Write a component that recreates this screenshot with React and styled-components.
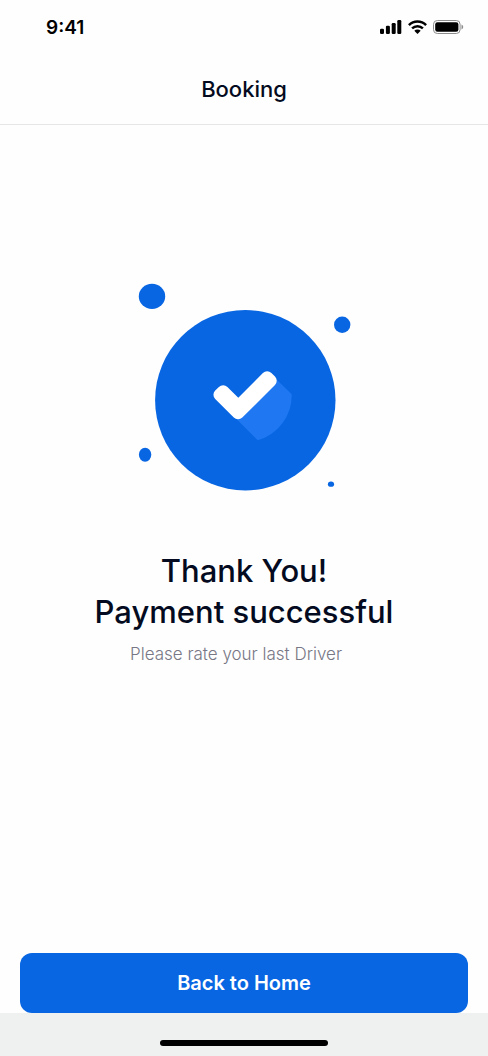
import React from 'react'
import styled, { createGlobalStyle } from 'styled-components'

const GlobalStyle = createGlobalStyle`
  * {
    box-sizing: border-box;
  }

  body {
    margin: 0;
    background: #fefefe;
    color: #040b20;
    font-family: Inter, 'Liberation Sans', sans-serif;
  }
`
const Screen = styled.div`
  display: flex;
  flex-direction: column;
  min-height: 100vh;
`
const StatusBar = styled.div`
  display: flex;
  align-items: center;
  justify-content: space-between;
  height: 54px;
  padding: 0 24px 0 46px;
`
const Time = styled.span`
  color: #000000;
  font-size: 19px;
  font-weight: 600;
`
const StatusIcons = styled.div`
  display: flex;
  align-items: center;
  gap: 6px;

  svg {
    display: block;
  }
`
const Header = styled.header`
  display: flex;
  align-items: center;
  justify-content: center;
  height: 71px;
  border-bottom: 1px solid #e6e6e8;
`
const HeaderTitle = styled.h1`
  margin: 0;
  font-size: 22px;
  font-weight: 500;
  line-height: 28px;
`
const Content = styled.main`
  display: flex;
  flex: 1;
  flex-direction: column;
  align-items: center;
  padding: 158px 20px 0;
  text-align: center;
`
const Illustration = styled.svg`
  display: block;
  margin-bottom: 59px;
  overflow: visible;
`
const Message = styled.h2`
  margin: 0 0 10px;
  font-size: 31px;
  font-weight: 500;
  line-height: 41px;
`
const Hint = styled.p`
  margin: 0;
  padding-right: 16px;
  color: #777785;
  font-size: 17px;
  font-weight: 300;
  line-height: 24px;
`
const Actions = styled.div`
  padding: 0 20px;
`
const ButtonHome = styled.button`
  display: block;
  width: 100%;
  height: 60px;
  padding: 0;
  border: none;
  border-radius: 12px;
  background: #0866e3;
  color: #ffffff;
  font-family: inherit;
  font-size: 20px;
  font-weight: 600;
  cursor: pointer;

  &:hover {
    opacity: 0.9;
  }
`
const HomeArea = styled.footer`
  display: flex;
  align-items: flex-end;
  justify-content: center;
  height: 43px;
  padding-bottom: 10px;
  background: #eff1f1;
`
const HomeIndicator = styled.div`
  width: 168px;
  height: 6px;
  border-radius: 3px;
  background: #000000;
`

const SignalIcon = () => (
  <svg width="22" height="14" viewBox="0 0 22 14" aria-hidden="true">
    <rect x="0" y="8.7" width="4" height="5.3" rx="1.2" />
    <rect x="5.9" y="5.8" width="4" height="8.2" rx="1.2" />
    <rect x="11.7" y="3" width="4" height="11" rx="1.2" />
    <rect x="17.3" y="0" width="4" height="14" rx="1.2" />
  </svg>
)

const WifiIcon = () => (
  <svg width="19" height="14" viewBox="0 0 19 14" aria-hidden="true">
    <g fill="none" stroke="#000000" strokeWidth="2.5">
      <path d="M0.9 5.1a12.3 12.3 0 0 1 17.2 0" />
      <path d="M4.1 8.4a7.8 7.8 0 0 1 10.8 0" />
    </g>
    <path d="M9.5 14l3.2-3.3a4.6 4.6 0 0 0-6.4 0z" />
  </svg>
)

const BatteryIcon = () => (
  <svg width="31" height="14" viewBox="0 0 31 14" aria-hidden="true">
    <rect x="0.5" y="0.5" width="26.6" height="13" rx="3.8" fill="none" stroke="#8c8c8c" />
    <rect x="2.2" y="2.2" width="23.2" height="9.6" rx="2.2" />
    <path d="M28.5 4.6c1 .4 1.7 1.3 1.7 2.4s-.7 2-1.7 2.4z" fill="#8c8c8c" />
  </svg>
)

const SuccessIllustration = () => (
  <Illustration width="212" height="208" viewBox="0 0 212 208" aria-hidden="true">
    <g fill="#0866e3">
      <circle cx="107.3" cy="117.2" r="90.2" />
      <ellipse cx="14" cy="13.4" rx="13.2" ry="12.6" />
      <circle cx="204.2" cy="41.7" r="8.2" />
      <ellipse cx="7.1" cy="171.7" rx="6.2" ry="7" />
      <ellipse cx="193" cy="201.2" rx="3.1" ry="2.6" />
    </g>
    <path d="M136 94L153.7 111.2A46.7 46.7 0 0 1 119.7 157.3L98 135.6z" fill="#1f78f2" />
    <path
      d="M77.2 107.6L80.9 103.9A6 6 0 0 1 89.4 103.9L100.3 114.7L124.9 90.1A6 6 0 0 1 133.4 90.1L137 93.5A6 6 0 0 1 137 101.9L104.3 134.6A6 6 0 0 1 95.8 134.6L77.2 116.1A6 6 0 0 1 77.2 107.6z"
      fill="#ffffff"
    />
  </Illustration>
)

export default class BookingSuccessPage extends React.Component {
  render() {
    return (
      <Screen>
        <GlobalStyle />
        <StatusBar>
          <Time>9:41</Time>
          <StatusIcons>
            <SignalIcon />
            <WifiIcon />
            <BatteryIcon />
          </StatusIcons>
        </StatusBar>

        <Header>
          <HeaderTitle>Booking</HeaderTitle>
        </Header>

        <Content>
          <SuccessIllustration />
          <Message>
            Thank You!
            <br />
            Payment successful
          </Message>
          <Hint>Please rate your last Driver</Hint>
        </Content>

        <Actions>
          <ButtonHome type="button">Back to Home</ButtonHome>
        </Actions>
        <HomeArea>
          <HomeIndicator />
        </HomeArea>
      </Screen>
    )
  }
}
